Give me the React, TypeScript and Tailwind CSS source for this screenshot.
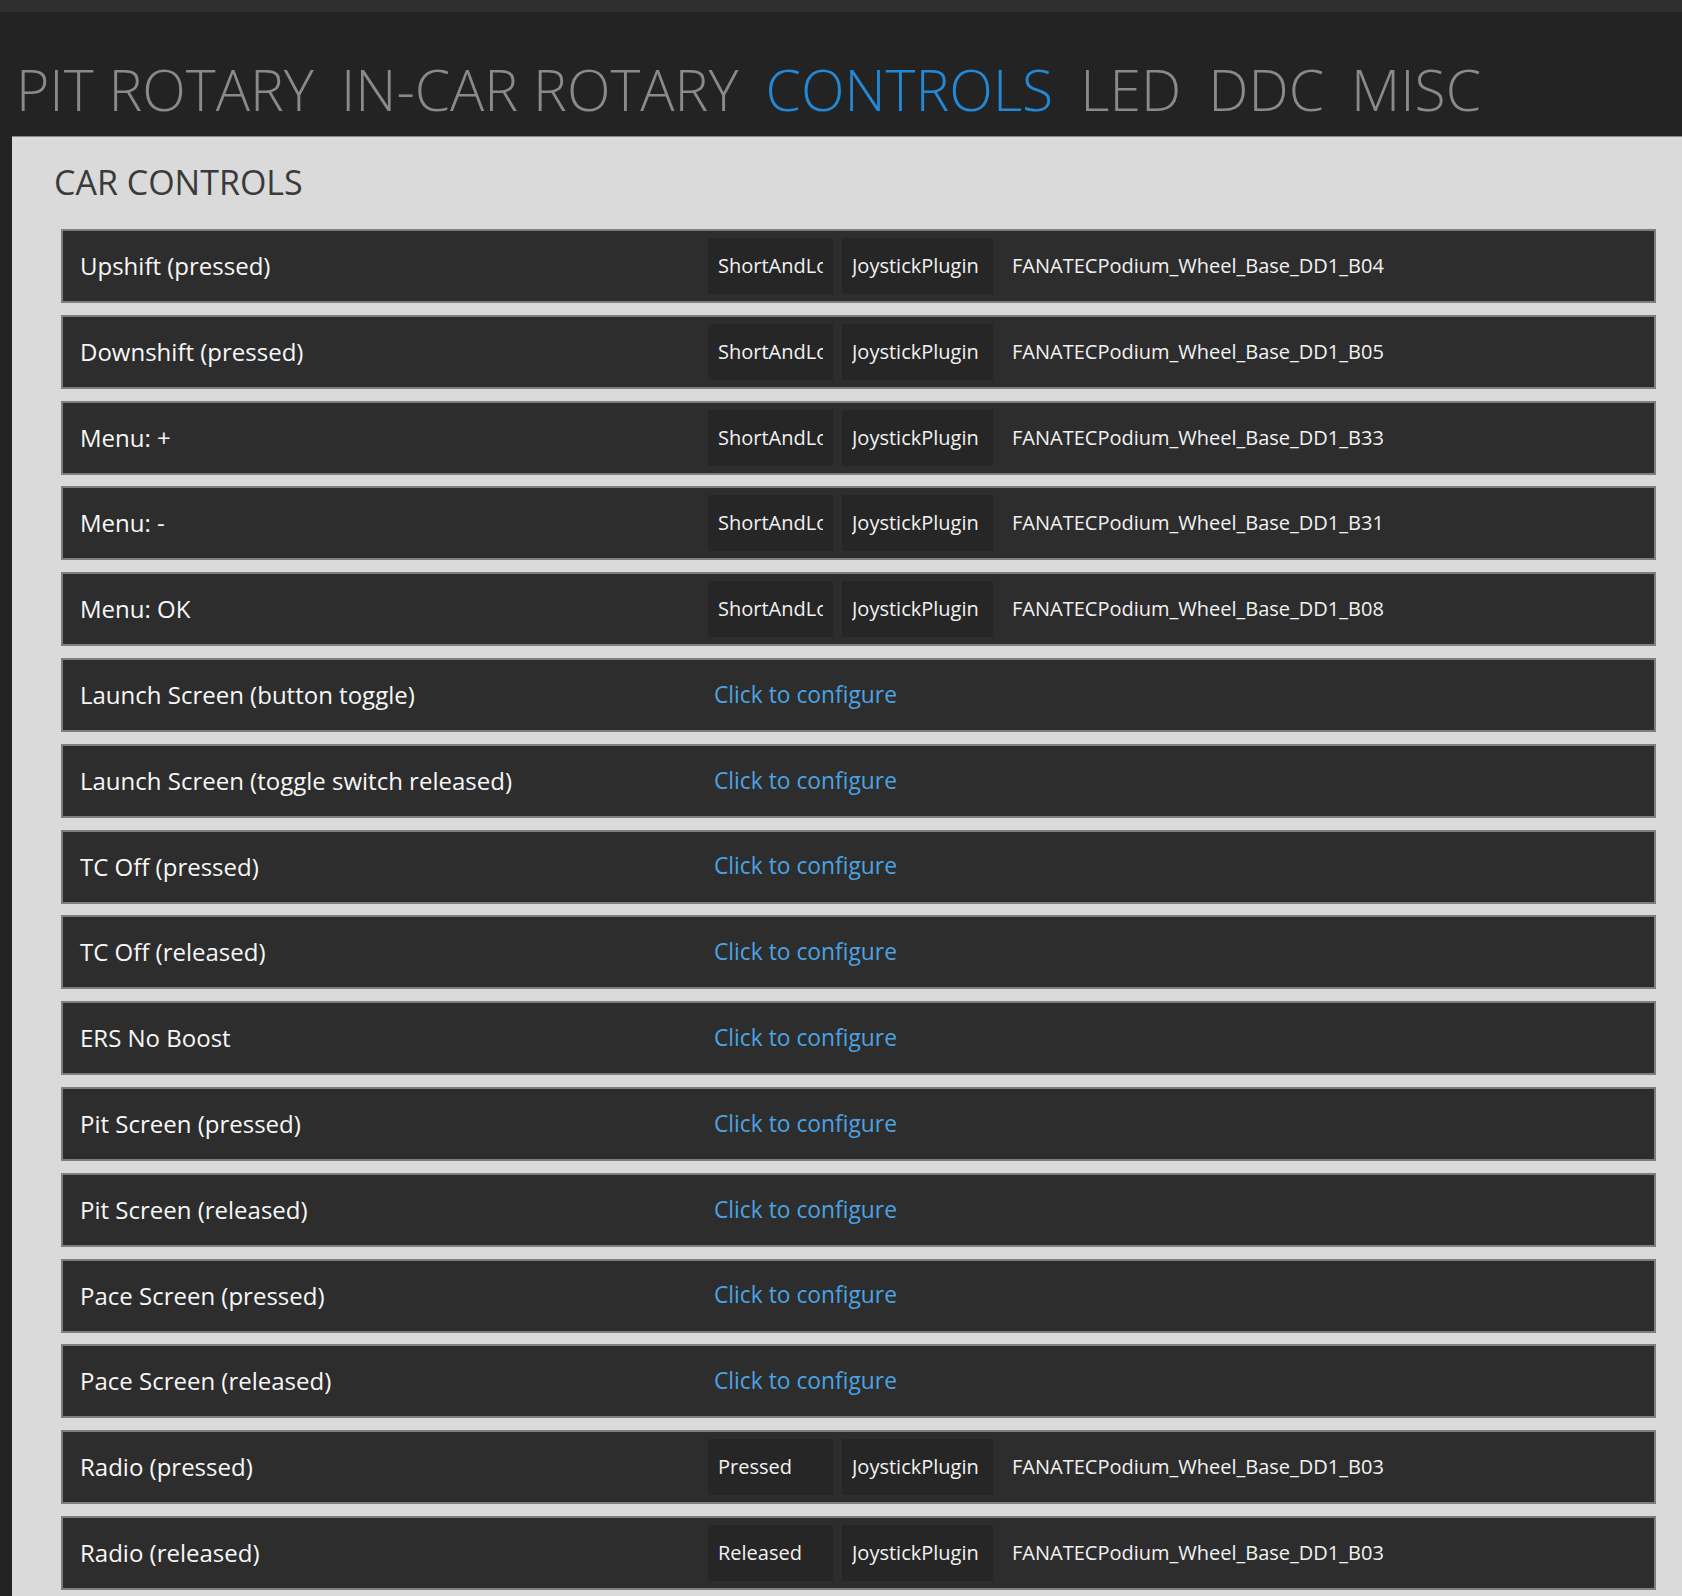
import React from "react";

type ControlRow = {
  label: string;
  mode?: string;
  plugin?: string;
  input?: string;
};

const tabs = ["PIT ROTARY", "IN-CAR ROTARY", "CONTROLS", "LED", "DDC", "MISC"];

const rows: ControlRow[] = [
  { label: "Upshift (pressed)", mode: "ShortAndLongPress", plugin: "JoystickPlugin", input: "FANATECPodium_Wheel_Base_DD1_B04" },
  { label: "Downshift (pressed)", mode: "ShortAndLongPress", plugin: "JoystickPlugin", input: "FANATECPodium_Wheel_Base_DD1_B05" },
  { label: "Menu: +", mode: "ShortAndLongPress", plugin: "JoystickPlugin", input: "FANATECPodium_Wheel_Base_DD1_B33" },
  { label: "Menu: -", mode: "ShortAndLongPress", plugin: "JoystickPlugin", input: "FANATECPodium_Wheel_Base_DD1_B31" },
  { label: "Menu: OK", mode: "ShortAndLongPress", plugin: "JoystickPlugin", input: "FANATECPodium_Wheel_Base_DD1_B08" },
  { label: "Launch Screen (button toggle)" },
  { label: "Launch Screen (toggle switch released)" },
  { label: "TC Off (pressed)" },
  { label: "TC Off (released)" },
  { label: "ERS No Boost" },
  { label: "Pit Screen (pressed)" },
  { label: "Pit Screen (released)" },
  { label: "Pace Screen (pressed)" },
  { label: "Pace Screen (released)" },
  { label: "Radio (pressed)", mode: "Pressed", plugin: "JoystickPlugin", input: "FANATECPodium_Wheel_Base_DD1_B03" },
  { label: "Radio (released)", mode: "Released", plugin: "JoystickPlugin", input: "FANATECPodium_Wheel_Base_DD1_B03" },
];

export default function App() {
  return (
    <div className="h-[1596px] w-[1682px] overflow-hidden bg-[#232323] font-['Open_Sans','Segoe_UI',sans-serif]">
      <div className="h-[12px] bg-[#2f2f2f]" />

      <nav className="flex h-[124px] gap-[27px] pl-[16px] pt-[49px]">
        {tabs.map((tab) => (
          <span
            key={tab}
            className={`whitespace-nowrap text-[57px] font-light leading-none ${tab === "CONTROLS" ? "text-[#2389d6]" : "text-[#8a8a8a]"}`}
          >
            {tab}
          </span>
        ))}
      </nav>

      <section className="ml-[12px] h-[1460px] border-t border-[#8a8a8a] bg-[#dadada] pr-[26px]">
        <h2 className="pl-[42px] pt-[28px] text-[34px] leading-none text-[#3a3a3a]">CAR CONTROLS</h2>
        <div className="ml-[49px] mt-[30px] flex flex-col gap-[11.8px]">
          {rows.map((row) => (
            <ControlItem key={row.label} row={row} />
          ))}
        </div>
      </section>
    </div>
  );
}

function ControlItem({ row }: { row: ControlRow }) {
  return (
    <div className="flex h-[74px] items-center border-2 border-[#7e7e7e] bg-[#2d2d2d]">
      <div className="w-[645px] shrink-0 pl-[17px] text-[24px] text-[#f7f7f7]">{row.label}</div>
      {row.mode ? (
        <div className="flex items-center gap-[9px]">
          <Chip width="w-[125px]">{row.mode}</Chip>
          <Chip width="w-[151px]">{row.plugin}</Chip>
          <div className="whitespace-nowrap pl-[10px] text-[20px] text-[#f2f2f2]">{row.input}</div>
        </div>
      ) : (
        <span className="pl-[6px] text-[22.8px] text-[#4ba3e3]">Click to configure</span>
      )}
    </div>
  );
}

function Chip({ width, children }: { width: string; children: React.ReactNode }) {
  return (
    <div className={`flex h-[56px] items-center bg-[#262626] px-[10px] ${width}`}>
      <div className="overflow-hidden whitespace-nowrap text-[20px] text-[#f2f2f2]">{children}</div>
    </div>
  );
}
